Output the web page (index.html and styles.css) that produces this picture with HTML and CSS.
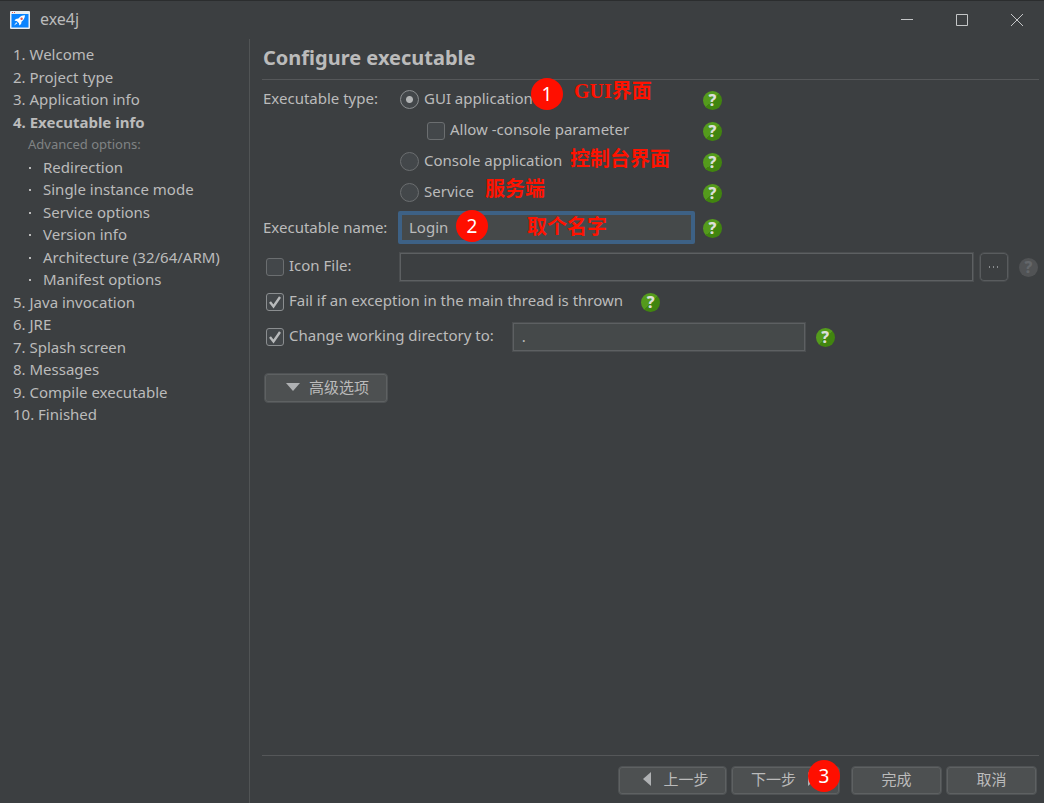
FILE: index.html
```html
<!DOCTYPE html>
<html lang="en">
<head>
<meta charset="utf-8">
<title>exe4j</title>
<link rel="stylesheet" href="styles.css">
</head>
<body>
<div class="window">
  <header class="titlebar">
    <svg class="app-icon" width="20" height="18" viewBox="0 0 20 18" aria-hidden="true">
      <rect width="20" height="18" rx="1" fill="#e9eef3"/>
      <rect x="1.5" y="3" width="17" height="13.5" fill="#0a84ff"/>
      <path d="M2 1.5h1M4 1.5h1" stroke="#e2574c"/>
      <path d="M15 4.2c-3 0-5 1.2-6.600 3.300L5.800 8 4.500 9.800l2.200.2 2.300 2.300.3 2.300 1.800-1.500.4-2.400c2-1.600 3.300-3.500 3.500-6.500z" fill="#fff"/>
      <path d="M6.300 11.200L4 14.500l3.300-2.200z" fill="#fff"/>
      <circle cx="11.600" cy="7.700" r="1.200" fill="#e2574c"/>
    </svg>
    <span class="app-name">exe4j</span>
    <div class="window-controls">
      <button type="button" aria-label="Minimize"><svg width="12" height="12" viewBox="0 0 12 12"><path d="M0 5.500h12"/></svg></button>
      <button type="button" aria-label="Maximize"><svg width="12" height="12" viewBox="0 0 12 12"><path d="M.5.5h11v11H.5z"/></svg></button>
      <button type="button" aria-label="Close"><svg width="12" height="12" viewBox="0 0 12 12"><path d="M0 0l12 12M12 0L0 12"/></svg></button>
    </div>
  </header>

  <div class="body">
    <nav class="sidebar" aria-label="Steps">
      <ul class="steps">
        <li>1. Welcome</li>
        <li>2. Project type</li>
        <li>3. Application info</li>
        <li class="current">4. Executable info</li>
        <li class="caption">Advanced options:</li>
        <li class="sub">Redirection</li>
        <li class="sub">Single instance mode</li>
        <li class="sub">Service options</li>
        <li class="sub">Version info</li>
        <li class="sub">Architecture (32/64/ARM)</li>
        <li class="sub">Manifest options</li>
        <li>5. Java invocation</li>
        <li>6. JRE</li>
        <li>7. Splash screen</li>
        <li>8. Messages</li>
        <li>9. Compile executable</li>
        <li>10. Finished</li>
      </ul>
    </nav>

    <main class="main">
      <h1 class="heading">Configure executable</h1>
      <form class="form">
        <div class="types" role="radiogroup" aria-labelledby="type-label">
          <div class="row">
            <span class="label" id="type-label">Executable type:</span>
            <div class="field option">
              <input type="radio" class="radio" name="type" id="gui" checked><label for="gui">GUI application</label>
              <span class="badge badge-one">1</span>
              <span class="note note-gui">GUI界面</span>
            </div>
            <button type="button" class="help" aria-label="Help">?</button>
          </div>
          <div class="row">
            <span class="label"></span>
            <div class="field option nested">
              <input type="checkbox" class="check" id="allow"><label for="allow">Allow -console parameter</label>
            </div>
            <button type="button" class="help" aria-label="Help">?</button>
          </div>
          <div class="row">
            <span class="label"></span>
            <div class="field option">
              <input type="radio" class="radio" name="type" id="console"><label for="console">Console application</label>
              <span class="note note-console">控制台界面</span>
            </div>
            <button type="button" class="help" aria-label="Help">?</button>
          </div>
          <div class="row">
            <span class="label"></span>
            <div class="field option">
              <input type="radio" class="radio" name="type" id="service"><label for="service">Service</label>
              <span class="note note-service">服务端</span>
            </div>
            <button type="button" class="help" aria-label="Help">?</button>
          </div>
        </div>

        <div class="row name-row">
          <label class="label" for="name">Executable name:</label>
          <div class="field">
            <input type="text" class="text active" id="name" value="Login">
            <span class="badge badge-two">2</span>
            <span class="note note-name">取个名字</span>
          </div>
          <button type="button" class="help" aria-label="Help">?</button>
        </div>

        <div class="row icon-row">
          <div class="label option">
            <input type="checkbox" class="check" id="icon"><label for="icon">Icon File:</label>
          </div>
          <input type="text" class="text empty" aria-label="Icon file path" disabled>
          <button type="button" class="browse" aria-label="Browse" disabled><svg width="10" height="2" viewBox="0 0 10 2"><path d="M0 0h1v2H0zM4 0h1v2H4zM8 0h1v2H8z"/></svg></button>
          <button type="button" class="help" aria-label="Help" disabled>?</button>
        </div>

        <div class="row plain-row">
          <div class="option">
            <input type="checkbox" class="check" id="fail" checked><label for="fail">Fail if an exception in the main thread is thrown</label>
          </div>
          <button type="button" class="help after-text" aria-label="Help">?</button>
        </div>

        <div class="row plain-row">
          <div class="option">
            <input type="checkbox" class="check" id="cwd" checked><label for="cwd">Change working directory to:</label>
          </div>
          <input type="text" class="text directory" aria-label="Working directory" value=".">
          <button type="button" class="help spaced" aria-label="Help">?</button>
        </div>

        <button type="button" class="button advanced">
          <svg width="14" height="8" viewBox="0 0 14 8" aria-hidden="true"><path d="M0 0h14L7 8z"/></svg>高级选项
        </button>
      </form>

      <footer class="footer">
        <button type="button" class="button step">
          <svg width="8" height="14" viewBox="0 0 8 14" aria-hidden="true"><path d="M8 0v14L0 7z"/></svg>上一步
        </button>
        <button type="button" class="button step next">
          下一步<svg width="8" height="14" viewBox="0 0 8 14" aria-hidden="true"><path d="M0 0v14l8-7z"/></svg>
          <span class="badge badge-three">3</span>
        </button>
        <button type="button" class="button end finish">完成</button>
        <button type="button" class="button end">取消</button>
      </footer>
    </main>
  </div>
</div>
</body>
</html>
```
FILE: styles.css
```css
* {
  box-sizing: border-box;
}

body {
  margin: 0;
  background: #3c3f41;
  color: #bbbbbb;
  font-family: "Noto Sans", "Noto Sans CJK SC", sans-serif;
  font-size: 15px;
  line-height: 22px;
}

button,
input {
  margin: 0;
  padding: 0;
  color: inherit;
  font: inherit;
}

.window {
  display: flex;
  flex-direction: column;
  min-height: 100vh;
  border-top: 1px solid #2b2d2e;
}

.titlebar {
  display: flex;
  align-items: center;
  height: 38px;
  padding-left: 10px;
}

.app-name {
  margin-left: 10px;
  padding-bottom: 2px;
  font-size: 16px;
}

.window-controls {
  display: flex;
  margin-left: auto;
}

.window-controls button {
  display: grid;
  place-items: center;
  width: 55px;
  height: 38px;
  border: 0;
  background: none;
}

.window-controls svg {
  fill: none;
  stroke: #c4c6c7;
}

.body {
  display: flex;
  flex: 1;
}

.sidebar {
  flex: none;
  width: 250px;
  padding: 4px 0 0 13px;
  border-right: 1px solid #515455;
}

.steps {
  margin: 0;
  padding: 0;
  list-style: none;
}

.steps li:nth-child(odd) {
  padding-bottom: 1px;
}

.steps .current {
  font-weight: bold;
}

.steps .caption {
  padding-left: 15px;
  color: #808384;
  font-size: 13px;
}

.steps .sub {
  display: flex;
  align-items: center;
  padding-left: 16px;
}

.steps .sub::before {
  content: "";
  width: 2px;
  height: 2px;
  margin: 2px 12px 0 0;
  background: #bbbbbb;
}

.main {
  display: flex;
  flex: 1;
  flex-direction: column;
  min-width: 0;
  padding: 0 5px 8px 12px;
}

.heading {
  margin: 0;
  padding: 4px 1px 6px;
  border-bottom: 1px solid #555759;
  font-size: 20px;
  line-height: 30px;
}

.form {
  flex: 1;
  padding: 4px 1px 0;
}

.row {
  display: flex;
  align-items: center;
}

.types .row {
  height: 31px;
}

.label {
  flex: none;
  width: 135px;
}

span.label,
.option label {
  padding-bottom: 4px;
}

label {
  padding-bottom: 2px;
}

.field {
  position: relative;
  flex: none;
  width: 297px;
}

.option {
  display: flex;
  align-items: center;
  gap: 5px;
  padding-left: 3px;
}

.types .option {
  padding-left: 2px;
}

.types .nested {
  padding-left: 29px;
}

.radio,
.check {
  flex: none;
  appearance: none;
  width: 18px;
  height: 18px;
  border: 1px solid #6b6e70;
  border-radius: 3px;
  background: #43474a;
}

.radio {
  width: 19px;
  height: 19px;
  border-radius: 50%;
}

.radio:checked {
  border-color: #8b8e90;
  background: radial-gradient(circle, #b2b4b5 3px, #43474a 4px);
}

.check:checked {
  border-color: #8b8e90;
  background: #43474a url("data:image/svg+xml,%3Csvg xmlns='http://www.w3.org/2000/svg' viewBox='0 0 16 16'%3E%3Cpath d='M3 8l3.500 4.500L13 3' fill='none' stroke='%23b8babb' stroke-width='2.400'/%3E%3C/svg%3E");
}

.help {
  flex: none;
  width: 19px;
  height: 19px;
  margin: 1px 0 0 8px;
  border: 0;
  border-radius: 50%;
  background: linear-gradient(135deg, #549b1c 50%, #41850f 50%);
  color: #dcdfda;
  font-size: 16px;
  font-weight: 800;
  line-height: 19px;
  text-align: center;
}

.help.spaced {
  margin-left: 10px;
}

.help.after-text {
  margin-left: 18px;
}

.help:disabled {
  margin-left: 10px;
  background: #515355;
  color: #64676a;
}

.text {
  width: 100%;
  height: 30px;
  padding: 0 9px 2px;
  border: 1px solid #4b4e50;
  box-shadow: inset 0 0 0 1px #5d6062;
  background: #45494a;
  outline: 0;
}

.text.active {
  display: block;
  height: 33px;
  padding: 0 7px 1px;
  border: 4px solid #3d6185;
  border-radius: 2px;
  box-shadow: none;
}

.text.empty {
  flex: 1;
  min-width: 0;
  margin-left: 1px;
  background: #3c3f41;
}

.text.directory {
  width: 294px;
  margin-left: 18px;
}

.name-row {
  margin-top: 3px;
}

.icon-row {
  margin-top: 8px;
}

.icon-row .browse {
  display: grid;
  place-items: center;
  width: 30px;
  height: 30px;
  margin-left: 5px;
  border: 1px solid #484b4d;
  border-radius: 5px;
  box-shadow: inset 0 0 0 1px #595c5e;
  background: none;
}

.browse svg {
  fill: #8b8e90;
}

.plain-row {
  height: 30px;
  margin-top: 5px;
}

.button {
  position: relative;
  display: flex;
  align-items: center;
  justify-content: center;
  height: 30px;
  padding-bottom: 2px;
  border: 1px solid #4f5254;
  border-radius: 4px;
  box-shadow: inset 0 0 0 1px #5e6162;
  background: #4d5051;
}

.button svg {
  fill: #afb1b3;
}

.advanced {
  gap: 9px;
  width: 124px;
  margin: 21px 0 0 1px;
  padding-left: 3px;
}

.footer {
  display: flex;
  justify-content: flex-end;
  gap: 4px;
  padding: 10px 2px 0;
  border-top: 1px solid #555759;
}

.footer .button {
  height: 29px;
  padding-bottom: 3px;
}

.step {
  gap: 12px;
  width: 109px;
}

.footer .step {
  padding-left: 7px;
}

.footer .next {
  padding: 0 4px 3px 0;
}

.end {
  width: 91px;
}

.finish {
  margin-left: 7px;
}

.badge {
  position: absolute;
  width: 32px;
  height: 32px;
  border-radius: 50%;
  background: #ff0f00;
  color: #ffffff;
  font-size: 19px;
  line-height: 32px;
  text-align: center;
}

.badge-one {
  top: -9px;
  left: 133px;
}

.badge-two {
  top: -1px;
  left: 58px;
}

.badge-three {
  top: -7px;
  right: -1px;
}

.note {
  position: absolute;
  color: #ff1200;
  font-family: "Liberation Serif", "Noto Sans CJK SC", serif;
  font-size: 20px;
  font-weight: bold;
  line-height: 24px;
  white-space: nowrap;
}

.note-gui {
  top: -8px;
  left: 176px;
}

.note-console {
  top: -2px;
  left: 172px;
}

.note-service {
  top: -3px;
  left: 87px;
}

.note-name {
  top: 4px;
  left: 129px;
}
```
